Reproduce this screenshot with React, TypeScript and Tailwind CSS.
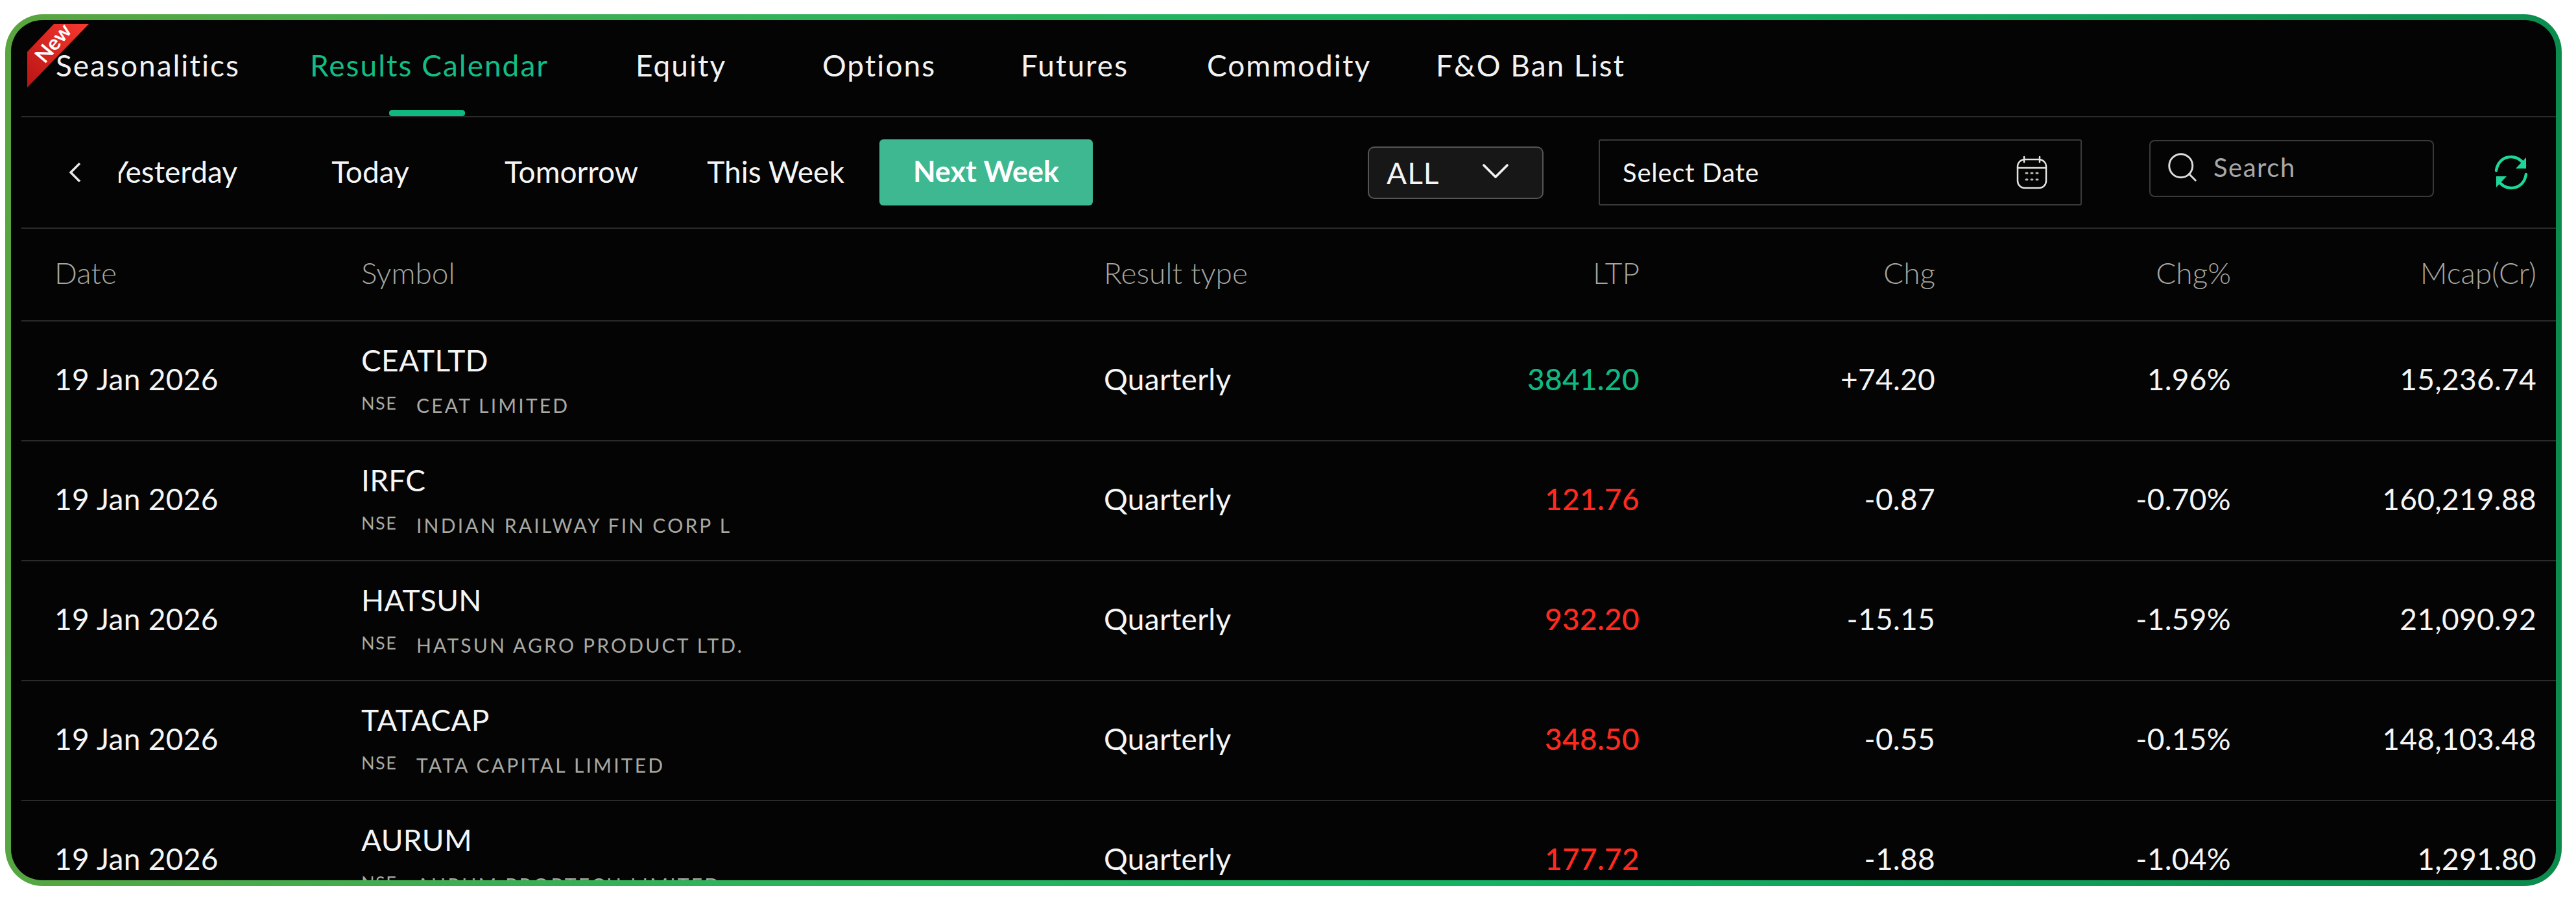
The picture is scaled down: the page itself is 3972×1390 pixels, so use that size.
import { ChevronDown, Search } from 'lucide-react';

const navTabs = [
  { label: 'Seasonalitics', cls: 'ml-[53px] w-[281px]' },
  { label: 'Results Calendar', cls: 'ml-[111px] w-[364px]', active: true },
  { label: 'Equity', cls: 'ml-[138px] w-[135px]' },
  { label: 'Options', cls: 'ml-[153px] w-[166px]' },
  { label: 'Futures', cls: 'ml-[140px] w-[159px]' },
  { label: 'Commodity', cls: 'ml-[128px] w-[244px]' },
  { label: 'F&O Ban List', cls: 'ml-[109px] w-[281px]' },
];

const rows = [
  { symbol: 'CEATLTD', name: 'CEAT LIMITED', ltp: '3841.20', chg: '+74.20', pct: '1.96%', mcap: '15,236.74', up: true },
  { symbol: 'IRFC', name: 'INDIAN RAILWAY FIN CORP L', ltp: '121.76', chg: '-0.87', pct: '-0.70%', mcap: '160,219.88' },
  { symbol: 'HATSUN', name: 'HATSUN AGRO PRODUCT LTD.', ltp: '932.20', chg: '-15.15', pct: '-1.59%', mcap: '21,090.92' },
  { symbol: 'TATACAP', name: 'TATA CAPITAL LIMITED', ltp: '348.50', chg: '-0.55', pct: '-0.15%', mcap: '148,103.48' },
  { symbol: 'AURUM', name: 'AURUM PROPTECH LIMITED', ltp: '177.72', chg: '-1.88', pct: '-1.04%', mcap: '1,291.80' },
];

const CalendarIcon = () => (
  <svg className="w-[50px] h-[52px] shrink-0" viewBox="0 0 50 52" fill="none" stroke="#e5e5e0" strokeWidth="2.5">
    <rect x="3" y="6" width="44" height="44" rx="11" />
    <path d="M3 19h44M13 2v8M37 2v8" strokeLinecap="round" />
    <path d="M16 27h2M24 27h2M32 27h2M16 37h2M24 37h2M32 37h2" strokeWidth="3" stroke="#bdbdb8" strokeLinecap="round" />
  </svg>
);

const RefreshIcon = () => (
  <svg className="w-[54px] h-[56px] shrink-0" viewBox="0 0 54 56" fill="none">
    <path d="M4 25C6 12 15 4 27 4c10 0 16 5 21 13" stroke="#1fd69a" strokeWidth="4.5" strokeLinecap="round" />
    <path d="M50 5v17H34z" fill="#1fd69a" />
    <path d="M50 31c-2 13-11 21-23 21-10 0-16-5-21-13" stroke="#1fd69a" strokeWidth="4.5" strokeLinecap="round" />
    <path d="M4 51V34h16z" fill="#1fd69a" />
  </svg>
);

export default function App() {
  return (
    <div className="h-[1390px] w-[3972px] bg-white pt-[22px] pl-[8px] pr-[22px] pb-[23px] font-['Lato',sans-serif]">
      <div className="relative h-full rounded-[58px] bg-[linear-gradient(95deg,#5aa53f_0%,#2fb35a_30%,#14b364_60%,#0b8a4c_100%)] p-[9px]">
        <div className="h-full overflow-hidden rounded-[48px] bg-[#040404] text-white">
          {/* Top tabs */}
          <div className="relative ml-[16px] flex h-[150px] items-center border-b-2 border-[#2a2a2a] pb-[10px] text-[46px] tracking-[2px]">
            {navTabs.map((t) => (
              <div key={t.label} className={`relative shrink-0 whitespace-nowrap text-center ${t.cls} ${t.active ? 'text-[#12bd85]' : 'text-[#f2f2f2]'}`}>
                {t.label}
                {t.active && <div className="absolute left-[122px] top-[104px] h-[9px] w-[117px] rounded-sm bg-[#10b981]"></div>}
              </div>
            ))}
          </div>

          {/* Filters */}
          <div className="ml-[16px] flex h-[172px] items-center border-b-2 border-[#2a2a2a] pl-[72px] text-[46px] text-[#f5f5f5]">
            <svg className="h-[32px] w-[20px] shrink-0" viewBox="0 0 20 32" fill="none" stroke="#e8e8e8" strokeWidth="3.5">
              <path d="M18 2 4 16l14 14" />
            </svg>
            <div className="-mt-[3px] ml-[58px] flex w-[183px] shrink-0 justify-end overflow-hidden">
              <span className="shrink-0">Yesterday</span>
            </div>
            <span className="-mt-[3px] ml-[145px] w-[120px] shrink-0 text-center">Today</span>
            <span className="-mt-[3px] ml-[147px] w-[202px] shrink-0 text-center">Tomorrow</span>
            <span className="-mt-[3px] ml-[110px] w-[212px] shrink-0 whitespace-nowrap text-center">This Week</span>
            <button className="ml-[54px] flex h-[102px] w-[329px] shrink-0 items-center justify-center rounded-md bg-[#3eb891] pb-[3px] text-[45px] font-bold text-white">
              Next Week
            </button>
            <div className="ml-[424px] flex h-[81px] w-[271px] shrink-0 items-center justify-between rounded-[10px] border-2 border-[#555] bg-[#171717] pl-[27px] pr-[36px] tracking-[1px]">
              <span>ALL</span>
              <ChevronDown size={72} strokeWidth={1.2} className="-mt-[4px] shrink-0" />
            </div>
            <div className="ml-[85px] flex h-[102px] w-[745px] shrink-0 items-center justify-between rounded-[3px] border-2 border-[#3a3a3a] pl-[35px] pr-[50px] text-[40px] tracking-[0.8px]">
              <span>Select Date</span>
              <CalendarIcon />
            </div>
            <div className="-mt-[12px] ml-[104px] flex h-[88px] w-[439px] shrink-0 items-center rounded-[8px] border-2 border-[#3a3a3a] pl-[22px] pb-[4px] text-[40px] tracking-[1.5px] text-[#a8a8a8]">
              <Search size={54} strokeWidth={1.3} color="#dcdcdc" className="shrink-0" />
              <span className="ml-[21px]">Search</span>
            </div>
            <div className="ml-[92px]">
              <RefreshIcon />
            </div>
          </div>

          {/* Table */}
          <div className="ml-[16px] grid h-[143px] grid-cols-[473px_1145px_370px_456px_456px_456px_471px] items-center border-b-2 border-[#2a2a2a] pl-[51px] pb-[6px] text-[46px] font-light text-[#a6a6a0]">
            <div>Date</div>
            <div>Symbol</div>
            <div>Result type</div>
            <div className="text-right">LTP</div>
            <div className="text-right">Chg</div>
            <div className="text-right">Chg%</div>
            <div className="text-right">Mcap(Cr)</div>
          </div>

          {rows.map((r) => (
            <div key={r.symbol} className="ml-[16px] grid h-[185px] grid-cols-[473px_1145px_370px_456px_456px_456px_471px] items-center border-b-2 border-[#2a2a2a] pl-[51px] text-[46px] tracking-[0.3px] text-[#f5f5f5]">
              <div className="-mt-[6px]">19 Jan 2026</div>
              <div className="-mt-[4px]">
                <div className="leading-[54px]">{r.symbol}</div>
                <div className="mt-[24px] flex text-[30px] leading-[36px] tracking-[3.2px] text-[#a9a9a3]">
                  <span className="-mt-[3px] w-[85px] shrink-0 text-[27px] tracking-[1.5px]">NSE</span>
                  <span>{r.name}</span>
                </div>
              </div>
              <div className="-mt-[6px]">Quarterly</div>
              <div className={`-mt-[6px] text-right font-medium ${r.up ? 'text-[#10b981]' : 'text-[#ff2a1f]'}`}>{r.ltp}</div>
              <div className="-mt-[6px] text-right">{r.chg}</div>
              <div className="-mt-[6px] text-right">{r.pct}</div>
              <div className="-mt-[6px] text-right">{r.mcap}</div>
            </div>
          ))}
        </div>

        {/* New ribbon */}
        <div className="absolute left-[34px] top-[15px] h-[98px] w-[95px]">
          <svg className="h-full w-full" viewBox="0 0 95 98">
            <defs>
              <linearGradient id="ribbon" x1="0" y1="1" x2="1" y2="0">
                <stop offset="0" stopColor="#b81414" />
                <stop offset="1" stopColor="#f8392f" />
              </linearGradient>
            </defs>
            <polygon points="41,0 95,0 0,98 0,43" fill="url(#ribbon)" />
          </svg>
          <span className="absolute left-[6px] top-[13px] -rotate-[50deg] text-[32px] font-bold leading-none text-white">New</span>
        </div>
      </div>
    </div>
  );
}
